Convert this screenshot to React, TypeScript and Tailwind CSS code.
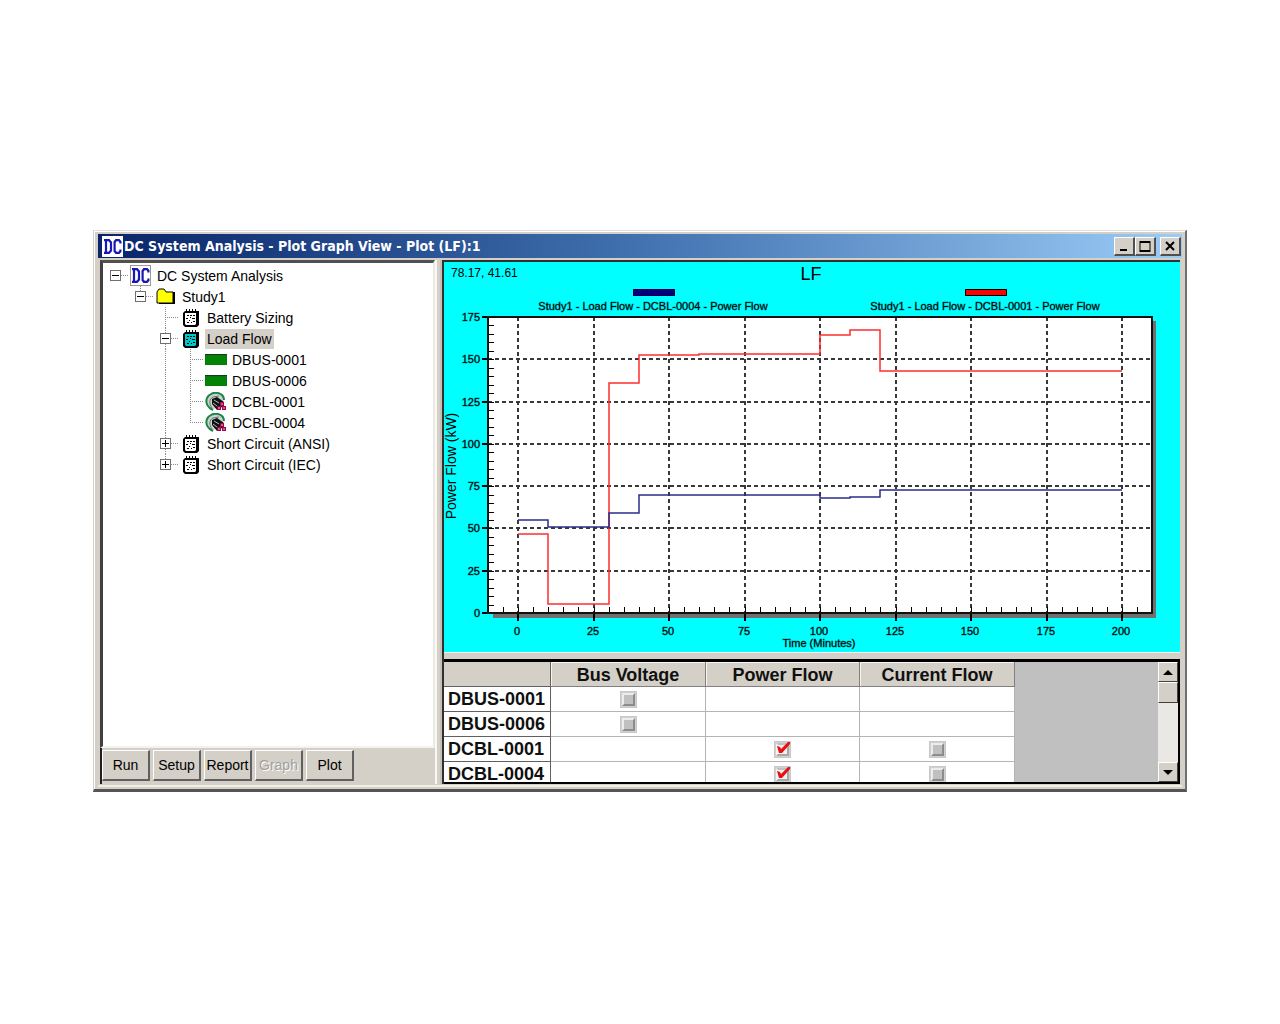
import React from "react";

const RED = "#ff2c2c";
const NAVY = "#2c2c8c";

/* ---------- tree ---------- */

type Cell = "blank" | "vert" | "tee" | "elbow" | "minusRoot" | "minusElbow" | "minusTee" | "plusTee" | "plusElbow";
type IconName = "dc" | "folder" | "note" | "noteActive" | "bus" | "cable";

interface Node {
  cells: Cell[];
  icon: IconName;
  label: string;
  selected?: boolean;
}

const nodes: Node[] = [
  { cells: ["minusRoot"], icon: "dc", label: "DC System Analysis" },
  { cells: ["blank", "minusElbow"], icon: "folder", label: "Study1" },
  { cells: ["blank", "blank", "tee"], icon: "note", label: "Battery Sizing" },
  { cells: ["blank", "blank", "minusTee"], icon: "noteActive", label: "Load Flow", selected: true },
  { cells: ["blank", "blank", "vert", "tee"], icon: "bus", label: "DBUS-0001" },
  { cells: ["blank", "blank", "vert", "tee"], icon: "bus", label: "DBUS-0006" },
  { cells: ["blank", "blank", "vert", "tee"], icon: "cable", label: "DCBL-0001" },
  { cells: ["blank", "blank", "vert", "elbow"], icon: "cable", label: "DCBL-0004" },
  { cells: ["blank", "blank", "plusTee"], icon: "note", label: "Short Circuit (ANSI)" },
  { cells: ["blank", "blank", "plusElbow"], icon: "note", label: "Short Circuit (IEC)" },
];

function Guide({ kind }: { kind: Cell }) {
  const up = kind !== "blank" && kind !== "minusRoot";
  const down = ["vert", "tee", "minusTee", "plusTee"].includes(kind);
  const across = kind !== "blank" && kind !== "vert";
  const box = kind.startsWith("minus") || kind.startsWith("plus");
  return (
    <svg viewBox="0 0 25 21" className="block h-[21px] w-[25px] shrink-0" shapeRendering="crispEdges" aria-hidden="true">
      <g stroke="#8c8c8c" strokeDasharray="1 1" fill="none">
        {up && <path d="M12.5 0V11" />}
        {down && <path d="M12.5 10V21" />}
        {across && <path d="M12 10.5H25" />}
      </g>
      {box && (
        <g>
          <rect x="7.5" y="5.5" width="10" height="10" fill="#fff" stroke="#707070" />
          <path d="M9 10.5H16" stroke="#000" />
          {kind.startsWith("plus") && <path d="M12.5 7V14" stroke="#000" />}
        </g>
      )}
    </svg>
  );
}

function DcMark({ framed }: { framed?: boolean }) {
  return (
    <svg viewBox="0 0 21 21" className="block h-[21px] w-[21px] shrink-0" aria-hidden="true">
      <rect x="0.5" y="0.5" width="20" height="20" fill="#fff" stroke={framed ? "#333" : "#fff"} strokeDasharray={framed ? "1 1" : undefined} />
      <g fill="none" stroke="#1818b8" strokeWidth="2.2">
        <path d="M2 4.2H7L9 6.4V14.6L7 16.8H2M4 4V17" />
        <path d="M18.4 7.5V5.6L17 4.2H14L12.6 6V15L14 16.8H17L18.4 15.4V13.5" />
      </g>
    </svg>
  );
}

function Note({ fill }: { fill: string }) {
  return (
    <svg viewBox="0 0 18 18" className="block h-[18px] w-[18px]" aria-hidden="true">
      <path d="M1 4L3 2H17V16L15 18H3L1 16V4Z" fill="#000" />
      <path d="M3 4H14V15L13 16H4L3 15Z" fill={fill} />
      <path d="M4.5 0V4M7.5 0V4M10.5 0V4M13.5 0V4" stroke="#000" />
      <path d="M5 6.5H7M8 6.5H10M11 6.5H13M4 9.5H6M8 8.5H9M10 9.5H13M5 13.5H7M9 13.5H10M11 12.5H13M7 11.5H8" stroke="#000" />
    </svg>
  );
}

function TreeIcon({ name }: { name: IconName }) {
  if (name === "dc") return <DcMark framed />;
  if (name === "note") return <Note fill="#fff" />;
  if (name === "noteActive") return <Note fill="#00c8cc" />;
  if (name === "folder")
    return (
      <svg viewBox="0 0 20 17" className="block h-[17px] w-[20px]" aria-hidden="true">
        <path d="M3 4H19V16H3Z" fill="#000" />
        <path d="M1 4L3 1H8L10 4H17V15H1Z" fill="#ffff00" stroke="#000" />
      </svg>
    );
  if (name === "bus")
    return (
      <svg viewBox="0 0 22 11" className="block h-[11px] w-[22px]" aria-hidden="true">
        <rect width="22" height="11" fill="#067a10" />
        <rect x="1" y="2" width="20" height="8" fill="#048404" />
        <path d="M0 0.5H22" stroke="#12401a" />
      </svg>
    );
  return (
    <svg viewBox="0 0 22 20" className="block h-[20px] w-[22px]" aria-hidden="true">
      <path d="M8 18C3 16 0 11 2 6C4 2 9 0 13 1C17 2 19 4 19 8" fill="#c8d4cc" stroke="#1e8444" strokeWidth="2" />
      <path d="M7 16C4 12 4 7 8 5L14 4" fill="none" stroke="#5c7c6c" />
      <path d="M7 7L12 5L19 10L17 15L12 18L7 12Z" fill="#111" />
      <path d="M9 8L14 11M8 11L12 14" stroke="#b8b8b8" />
      <g fill="#e84890" stroke="#900c48">
        <rect x="15.5" y="10.5" width="3" height="3" />
        <rect x="12.5" y="14.5" width="3" height="3" />
        <rect x="17.5" y="14.5" width="3" height="3" />
      </g>
    </svg>
  );
}

function TreeRow({ node }: { node: Node }) {
  const last = node.cells[node.cells.length - 1];
  const expandable = last.startsWith("minus") || last.startsWith("plus");
  return (
    <li role="treeitem" aria-selected={!!node.selected} className="flex h-[21px] items-center">
      {node.cells.map((c, i) =>
        expandable && i === node.cells.length - 1 ? (
          <button key={i} type="button" aria-label={"Toggle " + node.label}>
            <Guide kind={c} />
          </button>
        ) : (
          <Guide key={i} kind={c} />
        ),
      )}
      <span className="flex w-[25px] shrink-0 justify-center">
        <TreeIcon name={node.icon} />
      </span>
      <span className={node.selected ? "ml-0.5 bg-[#d4d0c8] px-0.5 leading-[20px]" : "ml-1 leading-[20px]"}>{node.label}</span>
    </li>
  );
}

/* ---------- chart ---------- */

const px = (minutes: number) => Math.round(74 + minutes * 3.02);
const py = (kw: number) => Math.round(351 - (kw * 296) / 175);

const redSteps = [
  [0, 46.7], [10, 5.3], [30, 136], [40, 152.3], [60, 153.3], [100, 164.3], [110, 167.3], [120, 143], [200, 143],
];
const navySteps = [
  [0, 54.7], [10, 50.8], [30, 59.2], [40, 69.5], [100, 68], [110, 68.8], [120, 72.5], [200, 72.5],
];

function stepPath(points: number[][]) {
  return points
    .map(([x, y], i) => (i === 0 ? `M${px(x)} ${py(y)}` : i === points.length - 1 ? `H${px(x)}` : `H${px(x)}V${py(y)}`))
    .join("");
}

const range = (from: number, to: number, step: number) =>
  Array.from({ length: Math.floor((to - from) / step) + 1 }, (_, i) => from + i * step);

function Chart() {
  return (
    <svg
      viewBox="0 0 736 390"
      className="block h-auto w-full bg-[#00ffff] font-['Liberation_Sans',sans-serif]"
      role="img"
      aria-label="LF power flow plot"
    >
      <g shapeRendering="crispEdges">
        <rect x="49" y="59" width="663" height="297" fill="#707070" />
        <rect x="44" y="55" width="664" height="296" fill="#fff" />
        <g stroke="#383838" strokeDasharray="4 3" strokeWidth="2">
          {range(0, 200, 25).map((m) => (
            <path key={m} d={`M${px(m)} 55V351`} />
          ))}
          {range(25, 150, 25).map((k) => (
            <path key={k} d={`M44 ${py(k)}H708`} />
          ))}
        </g>
        <g stroke="#000">
          {range(-5, 205, 5).map((m) => (
            <path key={m} d={`M${px(m)} 345V351`} />
          ))}
          {range(5, 170, 5).map((k) => (
            <path key={k} d={`M44 ${py(k)}H50`} />
          ))}
          {range(0, 175, 25).map((k) => (
            <path key={k} d={`M38 ${py(k)}H44`} strokeWidth="2" />
          ))}
          {range(0, 200, 25).map((m) => (
            <path key={m} d={`M${px(m)} 351V359`} strokeWidth="2" />
          ))}
        </g>
        <path d="M44 55H708V351H44Z" fill="none" stroke="#111" strokeWidth="2" />
        <rect x="189" y="27" width="41" height="6" fill="#000080" stroke="#000040" />
        <rect x="521" y="27" width="41" height="6" fill="#ff0000" stroke="#000" />
      </g>
      <path d={stepPath(redSteps)} fill="none" stroke={RED} strokeWidth="1.5" />
      <path d={stepPath(navySteps)} fill="none" stroke={NAVY} strokeWidth="1.5" />
      <g fill="#000" fontSize="11" stroke="none">
        <text x="7" y="15" fontSize="12">78.17, 41.61</text>
        <text x="367" y="18" fontSize="18" textAnchor="middle">LF</text>
        <g stroke="#000" strokeOpacity="0.3">
          <text x="209" y="48" textAnchor="middle">Study1 - Load Flow - DCBL-0004 - Power Flow</text>
          <text x="541" y="48" textAnchor="middle">Study1 - Load Flow - DCBL-0001 - Power Flow</text>
          {range(0, 175, 25).map((k) => (
            <text key={k} x="36" y={py(k) + 4} textAnchor="end">{k}</text>
          ))}
          {range(0, 200, 25).map((m) => (
            <text key={m} x={px(m) - 1} y="373" textAnchor="middle">{m}</text>
          ))}
          <text x="375" y="385" textAnchor="middle">Time (Minutes)</text>
        </g>
        <text transform="translate(12 204) rotate(-90)" fontSize="14" textAnchor="middle">Power Flow (kW)</text>
      </g>
    </svg>
  );
}

/* ---------- grid ---------- */

const columns = ["Bus Voltage", "Power Flow", "Current Flow"];
const rows: { name: string; values: (boolean | null)[] }[] = [
  { name: "DBUS-0001", values: [false, null, null] },
  { name: "DBUS-0006", values: [false, null, null] },
  { name: "DCBL-0001", values: [null, true, false] },
  { name: "DCBL-0004", values: [null, true, false] },
];

function Check({ label, on }: { label: string; on: boolean }) {
  return (
    <label className="mx-auto grid h-[17px] w-[17px] place-items-center border border-[#c8c8c8] bg-[#d0d0d0]">
      <input
        type="checkbox"
        aria-label={label}
        defaultChecked={on}
        className="peer col-start-1 row-start-1 h-[13px] w-[13px] appearance-none border-2 border-t-[#ececec] border-r-[#8c8c8c] border-b-[#8c8c8c] border-l-[#ececec] bg-[#c0c0c0] checked:border-t-[#c0c0c0] checked:border-r-[#a8a8a8] checked:border-b-[#a8a8a8] checked:border-l-[#f4f4f4] checked:bg-[#f0f0f0]"
      />
      <svg viewBox="0 0 15 15" className="pointer-events-none invisible col-start-1 row-start-1 h-[15px] w-[15px] peer-checked:visible" aria-hidden="true">
        <path d="M2 4L5 5L6 7L13 0H15V2L7 11H4Z" fill="#e81010" />
      </svg>
    </label>
  );
}

function ScrollButton({ dir }: { dir: "up" | "down" }) {
  return (
    <button
      type="button"
      aria-label={"Scroll " + dir}
      className="grid h-[20px] w-full shrink-0 place-items-center border border-t-white border-r-[#404040] border-b-[#404040] border-l-white bg-[#d4d0c8]"
    >
      <svg viewBox="0 0 10 5" className="h-[5px] w-[10px]" aria-hidden="true">
        <path d={dir === "up" ? "M0 5L5 0L10 5Z" : "M0 0L5 5L10 0Z"} fill="#000" />
      </svg>
    </button>
  );
}

function DataGrid() {
  return (
    <div className="flex h-[125px] overflow-hidden border-t-3 border-r-2 border-b-2 border-black bg-[#c0c0c0]">
      <table className="h-[125px] w-[571px] shrink-0 table-fixed border-separate border-spacing-0 text-[18px] leading-[24px] font-bold text-[#101010]">
        <colgroup>
          <col className="w-[107px]" />
          <col className="w-[155px]" />
          <col className="w-[154px]" />
          <col className="w-[155px]" />
        </colgroup>
        <thead>
          <tr className="h-[25px]">
            <td className="border-r border-b border-[#606060] bg-[#d4d0c8] p-0" />
            {columns.map((c) => (
              <th key={c} scope="col" className="border-r border-b border-r-[#808080] border-b-[#808080] bg-[#d4d0c8] p-0 pt-0.5 leading-[22px] shadow-[inset_1px_1px_0_#f4f4f0]">
                {c}
              </th>
            ))}
          </tr>
        </thead>
        <tbody>
          {rows.map((r) => (
            <tr key={r.name} className="h-[25px] bg-white">
              <th scope="row" className="border-r border-b border-[#606060] p-0 pl-1 text-left">{r.name}</th>
              {r.values.map((v, i) => (
                <td key={i} className="border-r border-b border-[#b4b4b4] p-0">
                  {v !== null && <Check label={r.name + " " + columns[i]} on={v} />}
                </td>
              ))}
            </tr>
          ))}
        </tbody>
      </table>
      <div className="ml-auto flex w-[20px] flex-col bg-[#eae8e4]">
        <ScrollButton dir="up" />
        <div className="h-[21px] border border-t-white border-r-[#404040] border-b-[#404040] border-l-white bg-[#d4d0c8]" />
        <div className="flex-1" />
        <ScrollButton dir="down" />
      </div>
    </div>
  );
}

/* ---------- window ---------- */

function CaptionButton({ label, children, className = "" }: { label: string; children: React.ReactNode; className?: string }) {
  return (
    <button
      type="button"
      aria-label={label}
      className={
        "grid h-[19px] w-[21px] place-items-center border-t border-r-2 border-b-2 border-l border-t-white border-r-[#505050] border-b-[#505050] border-l-white bg-[#d4d0c8] " +
        className
      }
    >
      <svg viewBox="0 0 14 14" className="h-[14px] w-[14px]" fill="none" stroke="#000" strokeWidth="2" aria-hidden="true">
        {children}
      </svg>
    </button>
  );
}

const actions = ["Run", "Setup", "Report", "Graph", "Plot"];

export default function App() {
  return (
    <main className="min-h-screen bg-white px-[93px] pt-[230px] font-['Liberation_Sans',Arial,sans-serif] text-black">
      <section className="border-t border-r-2 border-b-3 border-l border-t-[#e4e2de] border-r-[#707070] border-b-[#555] border-l-[#d4d0c8] bg-[#d4d0c8]">
        <div className="border-t border-l border-white pt-0.5 pr-[3px] pb-0.5 pl-[3px]">
          <header className="flex h-[24px] items-center bg-linear-to-r from-[#0a246a] via-[#4272b0] to-[#9cccf6] pr-px pl-1">
            <DcMark />
            <h1 className="ml-px flex-1 truncate font-['DejaVu_Sans_Condensed','DejaVu_Sans',sans-serif] text-[14px] leading-[24px] font-bold text-white">
              DC System Analysis - Plot Graph View - Plot (LF):1
            </h1>
            <CaptionButton label="Minimize">
              <path d="M3 11H10" />
            </CaptionButton>
            <CaptionButton label="Maximize">
              <path d="M2 3H12M2 12H12" />
              <path d="M2 2V13M12 2V13" strokeWidth="1" />
            </CaptionButton>
            <CaptionButton label="Close" className="ml-1">
              <path d="M3 3L11 11M11 3L3 11" />
            </CaptionButton>
          </header>

          <div className="mt-0.5 flex pr-0.5 pl-0.5">
            <div className="flex w-[335px] shrink-0 flex-col">
              <ul
                role="tree"
                className="flex-1 border-t-3 border-r-2 border-b-2 border-l-3 border-t-[#505050] border-r-[#ece9e4] border-b-[#f4f2ee] border-l-[#404040] bg-white pt-0.5 text-[14px]"
              >
                {nodes.map((n) => (
                  <TreeRow key={n.label} node={n} />
                ))}
              </ul>
              <div className="flex gap-[3px] border-l-2 border-[#202020] pt-0.5 pb-[3px]">
                {actions.map((a) => (
                  <button
                    key={a}
                    type="button"
                    disabled={a === "Graph"}
                    className="h-[31px] w-[48px] border-t border-r-2 border-b-2 border-l border-t-white border-r-[#606060] border-b-[#606060] border-l-white bg-[#d4d0c8] text-[14px] disabled:text-[#a0a0a0] disabled:[text-shadow:1px_1px_0_#fff]"
                  >
                    {a}
                  </button>
                ))}
              </div>
            </div>

            <div className="w-[7px] shrink-0 border-r-2 border-l-2 border-r-[#c4c0b8] border-l-[#f8f8f4]" />

            <div className="min-w-0 flex-1 border-t-2 border-l-2 border-[#303030]">
              <div className="border-b border-[#f4f4f4]">
                <Chart />
              </div>
              <div className="h-[6px] bg-[#d4d0c8]" />
              <DataGrid />
            </div>
          </div>
          <div className="mt-px h-0.5 bg-[#f0eee8]" />
        </div>
      </section>
    </main>
  );
}
